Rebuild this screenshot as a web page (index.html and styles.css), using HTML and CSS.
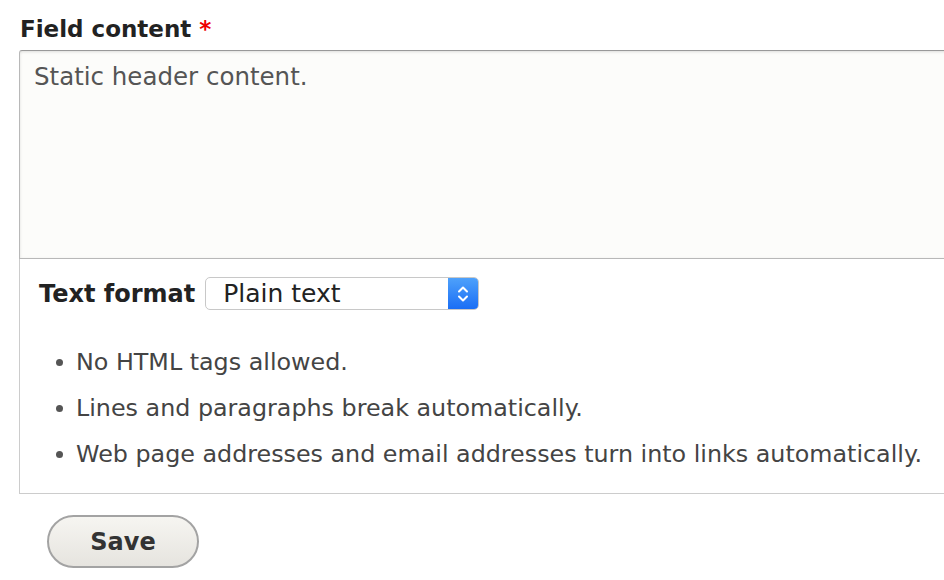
FILE: index.html
```html
<!DOCTYPE html>
<html>
<head>
<meta charset="utf-8">
<link rel="stylesheet" href="styles.css">
</head>
<body>
<form class="form">
  <div class="field">
    <label class="label">Field content <span class="req">*</span></label>
    <div class="textarea">Static header content.</div>
    <div class="format">
      <div class="format-row">
        <span class="format-label">Text format</span>
        <div class="select">
          <span class="select-text">Plain text</span>
          <span class="select-arrows">
            <svg width="14" height="24" viewBox="0 0 14 24"><path d="M3 9.5 L7 5.5 L11 9.5 M3 14.5 L7 18.5 L11 14.5" fill="none" stroke="#fff" stroke-width="2" stroke-linecap="round" stroke-linejoin="round"/></svg>
          </span>
        </div>
      </div>
      <ul class="tips">
        <li>No HTML tags allowed.</li>
        <li>Lines and paragraphs break automatically.</li>
        <li>Web page addresses and email addresses turn into links automatically.</li>
      </ul>
    </div>
  </div>
  <div class="actions">
    <button type="button" class="btn">Save</button>
  </div>
</form>
</body>
</html>
```
FILE: styles.css
```css
html, body {
  margin: 0;
  padding: 0;
  background: #fff;
  overflow: hidden;
}
body {
  font-family: "DejaVu Sans", Verdana, sans-serif;
  color: #333;
  width: 944px;
  height: 580px;
}
.form {
  padding: 15px 0 0 19px;
  width: 1000px;
}
.label {
  display: block;
  font-weight: bold;
  font-size: 23px;
  line-height: 28px;
  color: #222;
  margin-left: 1px;
  margin-bottom: 7px;
}
.req {
  color: #e00;
}
.textarea {
  border: 1px solid #b8b8b8;
  border-top-color: #999;
  border-radius: 3px 0 0 0;
  background: #fcfcfa;
  box-shadow: inset 0 1px 3px rgba(0,0,0,0.12);
  padding: 10px 14px;
  box-sizing: border-box;
  height: 209px;
  font-size: 24.5px;
  line-height: 32px;
  color: #555;
}
.format {
  border: 1px solid #ccc;
  border-top: none;
  height: 235px;
  box-sizing: border-box;
  padding: 18px 0 0 19px;
}
.format-row {
  display: flex;
  align-items: center;
  gap: 10px;
}
.format-label {
  font-weight: bold;
  font-size: 24px;
  color: #222;
}
.select {
  display: flex;
  width: 274px;
  height: 33px;
  box-sizing: border-box;
  border: 1px solid #c8c8c8;
  border-radius: 5px;
  background: #fff;
  overflow: hidden;
}
.select-text {
  flex: 1;
  font-size: 25px;
  line-height: 31px;
  padding-left: 17px;
  color: #222;
}
.select-arrows {
  width: 30px;
  background: linear-gradient(#4ea1fb, #1a6ef5);
  display: flex;
  align-items: center;
  justify-content: center;
}
.tips {
  margin: 29px 0 0 0;
  padding: 0 0 0 16px;
  font-size: 23.8px;
  line-height: 46px;
  color: #444;
  list-style: none;
}
.tips li {
  position: relative;
  padding-left: 21px;
}
.tips li::before {
  content: "";
  position: absolute;
  left: 1px;
  top: 20px;
  width: 7px;
  height: 7px;
  border-radius: 50%;
  background: #555;
}
.actions {
  padding: 21px 0 0 28px;
}
.btn {
  width: 152px;
  height: 53px;
  border: 2px solid #a3a3a3;
  border-radius: 27px;
  background: linear-gradient(#f6f5f1, #e6e4df);
  font-family: "DejaVu Sans", Verdana, sans-serif;
  font-weight: bold;
  font-size: 24px;
  color: #333;
  padding: 0;
}
```
